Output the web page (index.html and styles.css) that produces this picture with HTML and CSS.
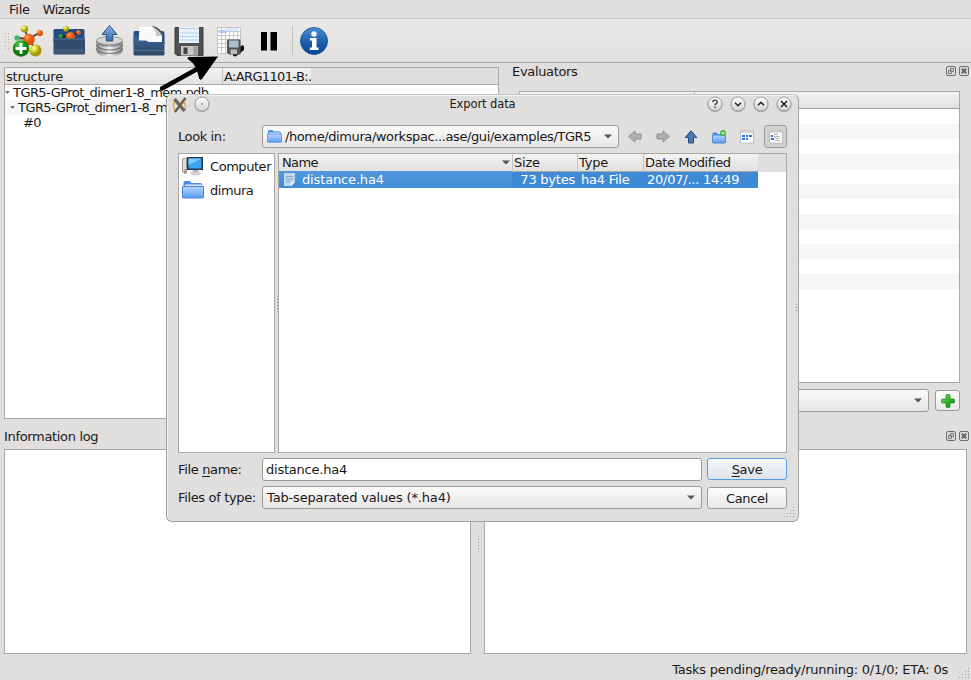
FILE: index.html
```
<!DOCTYPE html>
<html lang="en">
<head>
<meta charset="utf-8">
<title>Export data</title>
<link rel="stylesheet" href="styles.css">
</head>
<body>
<svg class="defs" width="0" height="0">
  <defs>
    <linearGradient id="blue" x1="0" y1="0" x2="0" y2="1"><stop offset="0" stop-color="#b5d5ff"/><stop offset="1" stop-color="#5a9cf0"/></linearGradient>
    <linearGradient id="navy" x1="0" y1="0" x2="0" y2="1"><stop offset="0" stop-color="#3d669a"/><stop offset="1" stop-color="#2f4765"/></linearGradient>
    <linearGradient id="steel" x1="0" y1="0" x2="0" y2="1"><stop offset="0" stop-color="#8fb4de"/><stop offset="1" stop-color="#3a6cab"/></linearGradient>
    <linearGradient id="metal" x1="0" y1="0" x2="1" y2="0"><stop offset="0" stop-color="#8b8b8b"/><stop offset=".5" stop-color="#f2f2f2"/><stop offset="1" stop-color="#8b8b8b"/></linearGradient>
    <linearGradient id="info" x1="0" y1="0" x2="0" y2="1"><stop offset="0" stop-color="#4d90d0"/><stop offset=".5" stop-color="#1f62b0"/><stop offset="1" stop-color="#05418f"/></linearGradient>
    <radialGradient id="yellow" cx=".35" cy=".3"><stop offset="0" stop-color="#fffbb0"/><stop offset=".5" stop-color="#dfd63a"/><stop offset="1" stop-color="#a39a10"/></radialGradient>
    <radialGradient id="orange" cx=".35" cy=".3"><stop offset="0" stop-color="#ffa673"/><stop offset=".5" stop-color="#f56a1c"/><stop offset="1" stop-color="#dd5510"/></radialGradient>
    <radialGradient id="green" cx=".4" cy=".25"><stop offset="0" stop-color="#63cf55"/><stop offset=".6" stop-color="#14a018"/><stop offset="1" stop-color="#087a0c"/></radialGradient>
    <linearGradient id="plus" x1="0" y1="0" x2="1" y2="1"><stop offset="0" stop-color="#8be070"/><stop offset=".5" stop-color="#2fb52a"/><stop offset="1" stop-color="#0d7d10"/></linearGradient>
    <linearGradient id="knob" x1="0" y1="0" x2="0" y2="1"><stop offset="0" stop-color="#ffffff"/><stop offset="1" stop-color="#d3d2d0"/></linearGradient>
    <symbol id="dock-float" viewBox="0 0 10 10"><rect x=".5" y=".5" width="9" height="9" rx="1.5" fill="#dddcda" stroke="#6f6e6c"/><path d="M4.500 2.500h3v3h-3zM2.500 4.500h3v3h-3z" fill="none" stroke="#777674"/></symbol>
    <symbol id="dock-close" viewBox="0 0 10 10"><rect x=".5" y=".5" width="9" height="9" rx="1.5" fill="#dddcda" stroke="#6f6e6c"/><path d="M2.800 2.800l4.400 4.400M7.200 2.800l-4.400 4.400" stroke="#656462" stroke-width="2"/></symbol>
    <symbol id="knob-bg" viewBox="0 0 18 18"><circle cx="9" cy="9.700" r="7.600" fill="#777" opacity=".45"/><circle cx="9" cy="9" r="7" fill="url(#knob)" stroke="#989795" stroke-width=".9"/></symbol>
    <symbol id="caret" viewBox="0 0 8 5"><path d="M0 .4h8L4 4.600z" fill="#565554"/></symbol>
    <symbol id="folder" viewBox="0 0 22 18"><path d="M2 1.500q0-1 1-1h5l1.500 2h9q1.200 0 1.200 1V8H2z" fill="#4c8ee6" stroke="#3d7bd0" stroke-width=".8"/><rect x="3" y="3.500" width="16.500" height="4" fill="#d8e9ff"/><path d="M.5 5.500h21v10.500q0 1-1 1h-19q-1 0-1-1z" fill="url(#blue)" stroke="#4684da"/></symbol>
    <symbol id="grip" viewBox="0 0 11 11"><path d="M9 1.500h1M6 4.500h1M9 4.500h1M3 7.500h1M6 7.500h1M9 7.500h1M0 10.500h1M3 10.500h1M6 10.500h1M9 10.500h1" stroke="#a4a3a1" stroke-width="1"/></symbol>
    <symbol id="dots" viewBox="0 0 1 16"><path d="M.5 0v16" stroke="#9a9997" stroke-dasharray="1 2"/></symbol>
  </defs>
</svg>

<nav class="menubar"><span>File</span><span class="wizards">Wizards</span></nav>

<div class="toolbar">
  <i class="handle"></i>
  <svg class="tool" width="32" height="34" viewBox="1 0 32 34">
    <path d="M12.500 5l4 10 12-7M16 15L5 14M17 15l6 10M17 14L9 24" fill="none" stroke="#4a3a32" stroke-width="1.800"/>
    <circle cx="17" cy="15.500" r="5.800" fill="url(#orange)"/><circle cx="28" cy="9" r="3.100" fill="url(#orange)"/>
    <circle cx="12.500" cy="5" r="3.600" fill="url(#yellow)"/><circle cx="5" cy="14" r="2.700" fill="#4db868"/>
    <circle cx="23.500" cy="26.500" r="6" fill="url(#yellow)"/>
    <circle cx="9" cy="24.500" r="8.200" fill="url(#green)"/><path d="M9 19v11M3.500 24.500h11" stroke="#fff" stroke-width="2.800"/>
  </svg>
  <svg class="tool" width="32" height="34" viewBox="0 0 32 34">
    <path d="M.5 6.500q0-1.500 1.500-1.500H30q1.500 0 1.500 1.500V18H.5z" fill="#244c82"/>
    <path d="M13 4l5 8 8-3M18 12l-10 .8" stroke="#222" stroke-width="1.500" fill="none"/>
    <circle cx="13" cy="4.700" r="3" fill="url(#yellow)"/><circle cx="25.500" cy="8.500" r="2.300" fill="url(#orange)"/><circle cx="7.500" cy="12" r="2" fill="#10b526"/><circle cx="17.500" cy="12.500" r="4.500" fill="url(#orange)"/>
    <path d="M.5 14.500h31.500V29q0 1.500-1.500 1.500H2Q.5 30.500.5 29z" fill="#334b6c"/><path d="M1 15h30" stroke="#58708f"/><path d="M1.500 25h29.500v4.500H1.500z" fill="#425a78"/>
  </svg>
  <svg class="tool" width="32" height="34" viewBox="-1 1 32 34">
    <path d="M2.500 18v10c0 3 5 5.500 12.500 5.500S28.500 31 28.500 28V18z" fill="url(#metal)"/>
    <path d="M2.500 17.500c0 3 5 5.500 13 5.500s13-2.500 13-5.500M2.500 21.500c0 3 5 5.500 13 5.500s13-2.500 13-5.500M2.500 25c0 3 5 5.500 13 5.500s13-2.500 13-5.500" fill="none" stroke="#757575" stroke-width="1.200"/>
    <ellipse cx="15.500" cy="17.500" rx="13" ry="4" fill="#d7d7d7" stroke="#999"/>
    <path d="M15.500 2.500l7.500 9h-4.300v6.500h-6.400v-6.500H8z" fill="url(#steel)" stroke="#244f87"/>
  </svg>
  <svg class="tool" width="32" height="34" viewBox="0 0 32 34">
    <path d="M.5 9Q.5 7 2 7h27q2.500 0 2.500 3v10H.5z" fill="#245083"/>
    <path d="M6.500 2.500H21l8 9V20H5.500z" fill="#fafafa"/><path d="M18 2c6 0 11 4 13 11-3-2-5-2-7-1 0-4-2-8-6-10z" fill="#4c5054"/><path d="M18 2q6 4 4.500 10 4-1.500 7 0-4-7-11.500-10z" fill="#c9cccd"/>
    <path d="M.5 12.500h4.500q.8 0 1 4h6.500q2 0 3 1.500h16v12q0 1.500-1.500 1.500H2q-1.500 0-1.500-1.500z" fill="url(#navy)"/><path d="M1 26.500h30" stroke="#55708f"/>
  </svg>
  <svg class="tool" width="32" height="34" viewBox="-1.500 1.500 32 34">
    <path d="M.5 5h28v28h-26l-2-2z" fill="#4f5054" stroke="#3e3f42"/><path d="M4.500 4.500h20v16h-20z" fill="#e9f3ff"/><path d="M4.500 6h20M5 10.500h19M5 14h19M5 17.500h19" stroke="#b8cfe9" stroke-width="1"/>
    <path d="M6.500 23.500h17V33h-17z" fill="#c9c8c5"/><path d="M9 25h4v6.500H9z" fill="#434447"/><path d="M19 24h4v9h-4z" fill="#9d9c99"/>
  </svg>
  <svg class="tool" width="32" height="34" viewBox="-1 1 32 34">
    <path d="M3.500 4.500h23v26h-23z" fill="#fff" stroke="#c4c4c4"/><path d="M4 8.500h22M4 12.500h22M4 16.500h22M4 20.500h22M4 24.500h22M7.500 5v25M11.500 5v25M15.500 5v25M19.500 5v25M23.500 5v25" stroke="#c8c8c8"/><path d="M5 7h8v3H5z" fill="#a9ccff"/><path d="M11 5h14v3H11z" fill="#dae9ff"/>
    <path d="M19 30v2.500q2 2 4 0l7-5.500v-3.500q-1-2-3-.500z" fill="#111"/><path d="M13 16.500h13.500v15H15l-2-2z" fill="#505255"/><path d="M15 17.500h9.500v7H15z" fill="#aebdce"/><path d="M16.500 26.500h6.500v4.500h-6.500z" fill="#bbb"/>
  </svg>
  <svg class="tool" width="32" height="34" viewBox="0 0 32 34"><path d="M8 8h6V26.500H8zM17.500 8h6.500V26.500h-6.500z" fill="#000"/></svg>
  <i class="rule"></i>
  <svg class="tool" width="32" height="34" viewBox="0 0 32 34">
    <circle cx="15" cy="17" r="13.500" fill="url(#info)" stroke="#1d5ba8"/><circle cx="15" cy="10" r="2.700" fill="#fff"/><path d="M11 14h6.500v9.500h2V26H10.800v-2.500h2.200v-7h-2z" fill="#fff"/>
  </svg>
</div>

<main class="workspace">
  <section class="structures">
    <div class="tree">
      <div class="head"><span class="c-structure">structure</span><span class="c-pair">A:ARG1101-B:.</span></div>
      <div class="node"><svg width="5" height="3"><use href="#caret"/></svg>TGR5-GProt_dimer1-8_mem.pdb</div>
      <div class="node alt lvl1"><svg width="5" height="3"><use href="#caret"/></svg>TGR5-GProt_dimer1-8_mem</div>
      <div class="node lvl2">#0</div>
    </div>
  </section>
  <section class="evaluators">
    <header class="dock"><span>Evaluators</span><svg width="10" height="10"><use href="#dock-float"/></svg><svg width="10" height="10"><use href="#dock-close"/></svg></header>
    <div class="table"><div class="head"></div><div class="stripes"></div></div>
    <div class="adder"><div class="combo"><svg width="8" height="5"><use href="#caret"/></svg></div>
      <button class="plus"><svg width="14" height="14" viewBox="0 0 14 14"><path d="M5 1.500q0-1 1-1h2q1 0 1 1V5h3.500q1 0 1 1v2q0 1-1 1H9v3.500q0 1-1 1H6q-1 0-1-1V9H1.500q-1 0-1-1V6q0-1 1-1H5z" fill="url(#plus)" stroke="#198a19" stroke-width=".7"/></svg></button></div>
  </section>
</main>

<div class="lower">
  <section class="log"><header class="dock"><span>Information log</span></header><div class="pane"></div></section>
  <div class="splitter"><svg width="1" height="16"><use href="#dots"/></svg></div>
  <section class="plot"><header class="dock"><span></span><svg width="10" height="10"><use href="#dock-float"/></svg><svg width="10" height="10"><use href="#dock-close"/></svg></header><div class="pane"></div></section>
</div>

<footer class="status"><span>Tasks pending/ready/running: 0/1/0; ETA: 0s</span><svg width="11" height="11"><use href="#grip"/></svg></footer>

<svg class="pointer" width="62" height="42" viewBox="0 0 62 42"><path d="M4 34.500L41 14" stroke="#000" stroke-width="4.500" stroke-linecap="round"/><path d="M60 2.500L31 3q-3 1 0 3 7 4 10 18 1 3 3 1z" fill="#000"/></svg>

<div class="dialog">
  <div class="titlebar">
    <svg width="16" height="16" viewBox="0 0 16 16"><path d="M3 4Q0 8 3 14M12 5q2 3 1 8" stroke="#f2a544" stroke-width="1.500" fill="none"/><path d="M2.500 2L12.500 14" stroke="#6b675e" stroke-width="3.400"/><path d="M13.500 1L3 15" stroke="#5f5c54" stroke-width="2.300"/></svg>
    <svg class="pin" width="18" height="18"><use href="#knob-bg"/><circle cx="9" cy="9" r=".8" fill="#555"/></svg>
    <span class="caption">Export data</span>
    <svg width="18" height="18"><use href="#knob-bg"/><path d="M6.800 7.200q0-2 2.200-2t2.200 1.800q0 1.200-1.200 1.900-1 .6-1 1.400M9 11.400v1.500" fill="none" stroke="#333" stroke-width="1.300"/></svg>
    <svg width="18" height="18"><use href="#knob-bg"/><path d="M6 7.800l3 3 3-3" fill="none" stroke="#222" stroke-width="1.500"/></svg>
    <svg width="18" height="18"><use href="#knob-bg"/><path d="M6 10.300l3-3 3 3" fill="none" stroke="#222" stroke-width="1.500"/></svg>
    <svg width="18" height="18"><use href="#knob-bg"/><path d="M6 6l6 6M12 6l-6 6" fill="none" stroke="#222" stroke-width="1.500"/></svg>
  </div>
  <div class="lookin">
    <label>Look in:</label>
    <div class="combo"><svg width="15" height="13" viewBox="0 0 22 18" preserveAspectRatio="none"><use href="#folder"/></svg><span>/home/dimura/workspac...ase/gui/examples/TGR5</span><svg width="8" height="5"><use href="#caret"/></svg></div>
    <div class="nav">
      <svg width="14" height="14" viewBox="0 0 14 14"><path d="M.6 6.500L7 1v3h6v5H7v3z" fill="#b2b1af" stroke="#8e8d8b"/></svg>
      <svg width="14" height="14" viewBox="0 0 14 14"><path d="M13.400 6.500L7 1v3H1v5h6v3z" fill="#b2b1af" stroke="#8e8d8b"/></svg>
      <svg width="14" height="14" viewBox="0 0 14 14"><path d="M7 .8L12.800 7.500H9.500v5.500h-5V7.500H1.200z" fill="#4878b5" stroke="#244b7d"/></svg>
      <svg width="14" height="14" viewBox="0 0 14 14"><path d="M.5 3.500q0-1 1-1h3l1 1.500h7v5H.5z" fill="#4a8de4"/><rect x=".5" y="5" width="13" height="8" rx="1" fill="url(#blue)" stroke="#4987da"/><circle cx="11" cy="3" r="2.900" fill="#36ac28"/><path d="M11 1.200v3.600M9.200 3h3.600" stroke="#d5ffc9"/></svg>
      <svg width="14" height="14" viewBox="0 0 14 14"><path d="M.5.8h13v12.400H.5z" fill="#fafafa" stroke="#bdbdbd"/><path d="M1 2h12" stroke="#ccc" stroke-width="1.500"/><path d="M2 5h3v2H2zM6 5h2v2H6zM9 5h3v2H9zM2 8h3v2H2zM6 8h2v2H6z" fill="#2d78dc"/></svg>
      <span class="pressed"><svg width="14" height="14" viewBox="0 0 14 14"><path d="M.5.8h13v12.400H.5z" fill="#fafafa" stroke="#bdbdbd"/><path d="M1 2h12" stroke="#ccc" stroke-width="1.500"/><path d="M2 5h2v2H2zM2 8h3v2H2z" fill="#2d78dc"/><path d="M5 4.500h4M5 6.500h6M6 8.500h4M6 10.500h5" stroke="#b5b5b5"/></svg></span>
    </div>
  </div>
  <div class="browser">
    <div class="places">
      <div><svg width="22" height="20" viewBox="0 0 22 20"><path d="M.5 3l4-1v15l-4-1z" fill="#dedede" stroke="#989898"/><path d="M5 1h16v13H5z" fill="#243445"/><path d="M6.500 2.500h13v10h-13z" fill="#39a4ef"/><path d="M6.500 2.500h13L6.500 9z" fill="#80cbff"/><path d="M11 14h5l1 3h-7z" fill="#bbb"/><ellipse cx="13.500" cy="17.500" rx="5" ry="1.500" fill="#ddd" stroke="#aaa" stroke-width=".5"/><path d="M3 13v5" stroke="#c05645"/></svg><span>Computer</span></div>
      <div><svg width="22" height="18"><use href="#folder"/></svg><span>dimura</span></div>
    </div>
    <div class="divider"><svg width="1" height="16"><use href="#dots"/></svg></div>
    <div class="files">
      <div class="head"><span>Name<svg width="8" height="5"><use href="#caret"/></svg></span><span>Size</span><span>Type</span><span class="date">Date Modified</span><i></i></div>
      <div class="file"><span><svg width="11" height="13" viewBox="0 0 11 13"><path d="M0 0h11v9l-4 4H0z" fill="#bdd6ee"/><path d="M2 3.500h7M2 6h7M2 8.500h4" stroke="#7fa8cf"/><path d="M11 9H7v4z" fill="#f0f7ff"/></svg><b>distance.ha4</b></span><span>73 bytes</span><span>ha4 File</span><span>20/07/... 14:49</span></div>
    </div>
  </div>
  <div class="form">
    <label>File <u>n</u>ame:</label><div class="input">distance.ha4</div><button class="save"><u>S</u>ave</button>
    <label>Files of type:</label><div class="combo type"><span>Tab-separated values (*.ha4)</span><svg width="8" height="5"><use href="#caret"/></svg></div><button class="cancel">Cancel</button>
  </div>
  <svg class="corner" width="11" height="11"><use href="#grip"/></svg>
  <svg class="edge" width="1" height="8" viewBox="0 0 1 8"><path d="M.5 0v8" stroke="#8a8987" stroke-dasharray="1 2"/></svg>
</div>
</body>
</html>
```
FILE: styles.css
```
* { box-sizing: border-box; }
body {
  margin: 0; width: 971px; height: 680px; overflow: hidden; position: relative;
  display: flex; flex-direction: column;
  background: #e0dfdd; color: #1a1918;
  font: 13px/15px "DejaVu Sans", sans-serif;
  letter-spacing: -.23px;
}
svg { flex: none; display: block; }
.defs { position: absolute; }
u { text-decoration: underline; text-underline-offset: 2px; }
button { font: inherit; color: inherit; padding: 0; }

.menubar { height: 19px; display: flex; gap: 13px; padding: 2px 9px 0; border-bottom: 1px solid #cac9c7; }
.wizards { letter-spacing: -.6px; }
.toolbar { height: 44px; display: flex; align-items: center; padding-left: 4px; border-bottom: 1px solid #a9a8a6; background: linear-gradient(#eae9e8, #e1e0de); }
.tool { margin-right: 8px; }
.handle { width: 5px; height: 17px; margin-right: 4px; background: radial-gradient(circle, #b3b2b0 .7px, transparent 1px) 0 0 / 3px 3px; }
.rule { width: 1px; height: 29px; background: #c2c1bf; margin: 0 6px 0 -1px; }

.workspace { height: 365px; display: flex; }
.structures { width: 499px; padding: 4px 0 0 4px; }
.tree { height: 352px; border: 1px solid #a9a8a6; background: #fff; }
.tree .head { height: 17px; display: flex; background: #e0dfdd; border-bottom: 1px solid #a9a8a6; line-height: 18px; }
.tree .head span { background: linear-gradient(#f3f3f2, #e2e1df); padding-left: 1px; }
.c-structure { width: 218px; border-right: 1px solid #c3c2c0; }
.tree .head .c-pair { width: 88px; letter-spacing: -.64px; white-space: nowrap; }
.node { height: 15px; display: flex; align-items: center; gap: 3px; white-space: nowrap; letter-spacing: -.56px; }
.alt { background: #f7f6f5; }
.lvl1 { padding-left: 5px; }
.lvl2 { padding-left: 18px; letter-spacing: -.6px; }

.evaluators { flex: 1; }
.dock { display: flex; gap: 3px; padding: 0 2px 0 0; letter-spacing: -.33px; }
.dock span { flex: 1; }
.evaluators .dock { height: 28px; padding: 3px 2px 0 13px; }
.evaluators .dock span { margin-top: -2px; }
.table { margin-left: 20px; width: 441px; height: 292px; border: 1px solid #a9a8a6; background: #fff; }
.table .head { height: 17px; background: linear-gradient(90deg, transparent 174px, #b8b7b5 174px 175px, transparent 175px), linear-gradient(#f3f3f2, #e2e1df); border-bottom: 1px solid #a0a09e; }
.stripes { height: 180px; background: repeating-linear-gradient(#fff 0 15px, #f7f6f5 15px 30px); }
.adder { display: flex; gap: 6px; margin: 6px 0 0 20px; align-items: flex-start; }
.adder .combo { width: 410px; }
.combo { height: 23px; border: 1px solid #9c9b99; border-radius: 3px; background: linear-gradient(#fbfbfa, #e6e5e4); display: flex; align-items: center; padding: 0 6px 0 4px; }
.combo svg:last-child { margin-left: auto; }
.plus { width: 25px; height: 21px; margin-top: 1px; border: 1px solid #9c9b99; border-radius: 3px; background: linear-gradient(#fdfdfc, #eae9e8); display: grid; place-items: center; }

.lower { height: 227px; display: flex; }
.lower .dock { height: 21px; padding-top: 3px; }
.lower .dock span { margin-top: -2px; }
.log { width: 467px; margin-left: 4px; }
.splitter { width: 13px; padding: 108px 0 0 7px; }
.plot { flex: 1; }
.plot .pane { width: 483px; }
.pane { height: 205px; border: 1px solid #a9a8a6; background: #fff; }
.status { flex: 1; display: flex; justify-content: flex-end; align-items: flex-start; gap: 11px; padding: 7px 1px 0 0; }
.status svg { margin-top: 5px; }

.pointer { position: absolute; left: 158px; top: 54px; }

.dialog {
  position: absolute; left: 166px; top: 94px; width: 633px; height: 428px;
  border: 1px solid #a3a2a0; border-top-color: #c5c4c2; border-radius: 6px; background: #e0dfdd;
  box-shadow: inset 1px 1px #f2f1f0; padding: 0 11px;
}
.titlebar { height: 30px; display: flex; align-items: flex-start; gap: 5px; margin: 0 -6px 0 -6px; }
.titlebar > svg:first-child { margin-top: 2px; }
.caption { flex: 1; text-align: center; font-size: 11.500px; padding: 1px 0 0 48px; line-height: 17px; letter-spacing: -.1px; }
.lookin { display: flex; height: 23px; align-items: center; }
.lookin label { width: 84px; letter-spacing: -.4px; }
.lookin .combo { width: 357px; }
.lookin .combo span { padding-left: 3px; letter-spacing: -.4px; white-space: nowrap; }
.nav { display: flex; align-items: center; gap: 14px; margin-left: 9px; }
.pressed { width: 23px; height: 23px; margin-left: -4px; border: 1px solid #9c9b99; border-radius: 3px; background: #d2d1cf; display: grid; place-items: center; }
.browser { display: flex; height: 300px; margin-top: 5px; }
.divider { width: 3px; padding: 143px 0 0 2px; }
.places { width: 97px; border: 1px solid #a9a8a6; background: #fff; padding-left: 3px; letter-spacing: -.45px; }
.places div { height: 24px; display: flex; align-items: center; gap: 6px; }
.files { width: 509px; border: 1px solid #a9a8a6; background: #fff; }
.files .head, .file { display: grid; grid-template-columns: 233px 65px 66px 115px 1fr; }
.files .head { height: 17px; line-height: 17px; }
.files .head span { background: linear-gradient(#f3f3f2, #e2e1df); border-bottom: 1px solid #a9a8a6; border-left: 1px solid #c3c2c0; padding-left: 1px; white-space: nowrap; }
.files .head span:first-child { border-left: 0; padding: 0 2px 0 3px; display: flex; align-items: center; justify-content: space-between; letter-spacing: -.6px; }
.files .head .date { letter-spacing: -.38px; }
.files .head i { background: #e0dfdd; }
.file { height: 17px; width: 479px; grid-template-columns: 233px 65px 66px 115px; background: #3f8ad5; color: #fff; line-height: 17px; white-space: nowrap; }
.file span:first-child { display: flex; align-items: center; gap: 8px; padding-left: 5px; background: linear-gradient(#5297dd, #418bd6); }
.file b { font-weight: 400; margin-left: -1px; letter-spacing: -.15px; }
.file span:nth-child(2) { text-align: right; padding-right: 2px; }
.file span:nth-child(3) { padding-left: 4px; }
.file span:nth-child(4) { padding-left: 4px; }
.form { display: grid; grid-template-columns: 84px 440px 80px; column-gap: 0; row-gap: 5px; margin-top: 5px; align-items: center; white-space: nowrap; }
.form label { letter-spacing: -.35px; }
.form button { margin-left: 5px; width: 80px; height: 22px; border: 1px solid #9c9b99; border-radius: 3px; background: linear-gradient(#fdfdfc, #e8e7e6); letter-spacing: -.3px; }
.form .save { border-color: #5a9ddd; background: linear-gradient(#f7f9fb, #dce3ea); margin-top: -1px; }
.form .cancel { margin-top: 1px; }
.input { height: 23px; border: 1px solid #9c9b99; border-radius: 3px; background: #fff; padding: 3px; }
.type { letter-spacing: -.16px; }
.corner { position: absolute; right: 3px; bottom: 4px; }
.edge { position: absolute; right: 1px; top: 209px; }
```
